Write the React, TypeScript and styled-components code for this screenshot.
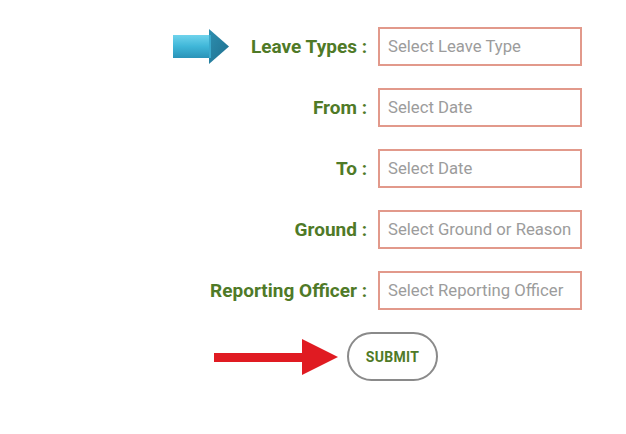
import React from 'react';
import styled, { createGlobalStyle } from 'styled-components';

const GlobalStyle = createGlobalStyle`
    html, body {
        margin: 0;
        padding: 0;
        background: #ffffff;
        font-family: Roboto, "Liberation Sans", sans-serif;
    }
`

const Page = styled.div`
    width: 626px;
    height: 434px;
    box-sizing: border-box;
    padding-top: 27px;
    background: #ffffff;
`

const FormDiv = styled.form`
    display: flex;
    flex-direction: column;
    gap: 22px;
`

const Row = styled.div`
    display: flex;
    flex-direction: row;
    align-items: center;
    gap: 11px;
`

const LabelCell = styled.div`
    display: flex;
    flex-direction: row;
    justify-content: flex-end;
    align-items: center;
    gap: 22px;
    width: 367px;
`

const FormLabel = styled.label`
    font-weight: bold;
    font-size: 19px;
    color: #4f7a27;
    white-space: nowrap;
`

const StyledInput = styled.input`
    box-sizing: border-box;
    width: 204px;
    height: 39px;
    border: 2px solid #e2998b;
    background: #ffffff;
    padding: 0 8px;
    font-family: Roboto, "Liberation Sans", sans-serif;
    font-size: 16.7px;
    color: #555;
    outline: none;

    &::placeholder {
        color: #9c9c9c;
    }
`

const ButtonRow = styled.div`
    display: flex;
    flex-direction: row;
    align-items: center;
    gap: 9px;
    padding-left: 214px;
`

const StyledButton = styled.button`
    box-sizing: border-box;
    width: 91px;
    height: 49px;
    border-radius: 25px;
    border: 2px solid #8a8a8a;
    background: #ffffff;
    color: #4f7a27;
    font-family: Roboto, "Liberation Sans", sans-serif;
    font-weight: bold;
    font-size: 14px;
    letter-spacing: 0.3px;
    padding: 0;
`

const BlueArrow = () => (
    <svg width="56" height="36" viewBox="0 0 56 36">
        <defs>
            <linearGradient id="shaft" x1="0" y1="0" x2="0" y2="1">
                <stop offset="0" stopColor="#6fd3ec" />
                <stop offset="0.5" stopColor="#3fb6d8" />
                <stop offset="1" stopColor="#2a93b8" />
            </linearGradient>
            <linearGradient id="head" x1="0" y1="0" x2="1" y2="1">
                <stop offset="0" stopColor="#2d8fb0" />
                <stop offset="1" stopColor="#1f6f8e" />
            </linearGradient>
        </defs>
        <rect x="0" y="6" width="38" height="23" fill="url(#shaft)" />
        <polygon points="36,0 56,17.5 36,35" fill="url(#head)" />
        <polygon points="36,6 38,6 38,29 36,29" fill="#3aa9cc" />
    </svg>
)

const RedArrow = () => (
    <svg width="124" height="36" viewBox="0 0 124 36">
        <rect x="0" y="14" width="92" height="9" fill="#e01b22" />
        <polygon points="88,0 124,18 88,36" fill="#e01b22" />
    </svg>
)

const fields = [
    { label: 'Leave Types :', placeholder: 'Select Leave Type', arrow: true },
    { label: 'From :', placeholder: 'Select Date' },
    { label: 'To :', placeholder: 'Select Date' },
    { label: 'Ground :', placeholder: 'Select Ground or Reason' },
    { label: 'Reporting Officer :', placeholder: 'Select Reporting Officer' },
]

function App() {
    return (
        <Page>
            <GlobalStyle />
            <FormDiv onSubmit={(e) => e.preventDefault()}>
                {fields.map((f, index) => (
                    <Row key={index}>
                        <LabelCell>
                            {f.arrow && <BlueArrow />}
                            <FormLabel>{f.label}</FormLabel>
                        </LabelCell>
                        <StyledInput placeholder={f.placeholder} />
                    </Row>
                ))}
                <ButtonRow>
                    <RedArrow />
                    <StyledButton type="submit">SUBMIT</StyledButton>
                </ButtonRow>
            </FormDiv>
        </Page>
    );
}

export default App;
